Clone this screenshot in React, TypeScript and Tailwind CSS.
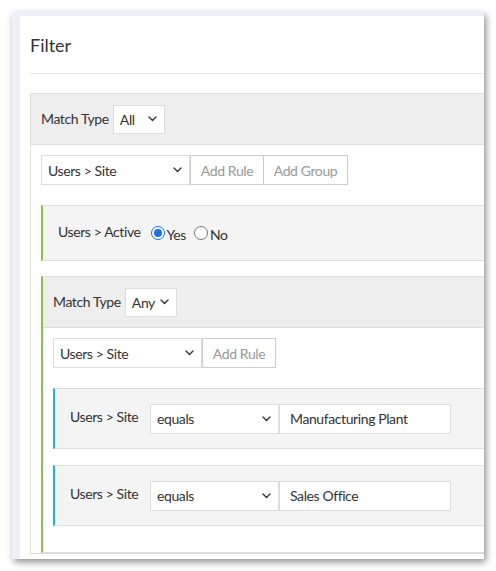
import React from 'react';

const font = { fontFamily: '"Lato", "Liberation Sans", sans-serif' };

const Chevron = () => (
  <svg width="9" height="6" viewBox="0 0 9 6" className="pointer-events-none absolute right-[7px] top-1/2 -translate-y-1/2">
    <path d="M1 1l3.5 3.5L8 1" fill="none" stroke="#333" strokeWidth="1.4" strokeLinecap="round" strokeLinejoin="round" />
  </svg>
);

const FakeSelect = ({ value, width, height = 30 }: { value: string; width: number; height?: number }) => (
  <div
    className="relative flex items-center bg-white border border-[#dddddd] pl-[6px] text-[14px] tracking-[-0.4px] text-[#333]"
    style={{ width, height }}
  >
    {value}
    <Chevron />
  </div>
);

const GroupHeader = ({ value }: { value: string }) => (
  <div className="flex items-center h-[51px] bg-[#eeeeee] border-b border-[#dddddd] pl-[10px] gap-[4px]">
    <span className="text-[14px] tracking-[-0.4px] text-[#333] -mt-[2px]">Match Type</span>
    <FakeSelect value={value} width={52} height={29} />
  </div>
);

const Radio = ({ checked, label }: { checked?: boolean; label: string }) => (
  <label className="flex items-center gap-[2px] text-[14px] tracking-[-0.4px] text-[#333]">
    <span
      className={`w-[14px] h-[14px] rounded-full flex items-center justify-center bg-white border ${checked ? 'border-[#1a73e8]' : 'border-[#767676]'}`}
    >
      {checked && <span className="w-[8px] h-[8px] rounded-full bg-[#1a73e8]" />}
    </span>
    <span className="mt-[2px]">{label}</span>
  </label>
);

const SiteRule = ({ value }: { value: string }) => (
  <div className="flex items-center h-[61px] bg-[#f4f4f4] border-y border-[#dddddd] border-l-2 border-l-[#17bad6] pl-[15px]">
    <span className="text-[14px] tracking-[-0.4px] text-[#333] w-[80px] -mt-[5px]">Users &gt; Site</span>
    <FakeSelect value="equals" width={129} />
    <div className="h-[30px] w-[172px] border border-[#dddddd] bg-white flex items-center pl-[10px] text-[14px] tracking-[-0.4px] text-[#333]">
      {value}
    </div>
  </div>
);

const Btn = ({ label, width, className = '' }: { label: string; width: number; className?: string }) => (
  <div
    className={`h-[30px] border border-[#cccccc] bg-white flex items-center justify-center text-[14px] tracking-[-0.4px] text-[#999] ${className}`}
    style={{ width }}
  >
    {label}
  </div>
);

export default function App() {
  return (
    <div className="p-[12px] bg-white" style={font}>
      <div className="w-[472px] h-[547px] bg-[#edf0f6] pt-[4px] pl-[8px] overflow-hidden shadow-[2px_3px_7px_rgba(0,0,0,0.45)]">
        <div className="bg-white h-full overflow-hidden pl-[10px]">
          <div className="h-[58px] flex items-center pt-[2px] border-b border-[#e5e5e5] text-[18px] text-[#333]">
            Filter
          </div>

          <div className="mt-[19px] w-[600px] border border-[#dddddd]">
            <GroupHeader value="All" />
            <div className="pl-[10px] pt-[10px]">
              <div className="flex">
                <FakeSelect value="Users > Site" width={149} />
                <Btn label="Add Rule" width={74} />
                <Btn label="Add Group" width={85} className="-ml-px" />
              </div>

              <div className="mt-[20px] flex items-center h-[56px] bg-[#f4f4f4] border-y border-[#dddddd] border-l-2 border-l-[#8bc34a] pl-[15px] gap-[10px]">
                <span className="text-[14px] tracking-[-0.4px] text-[#333] -mt-[3px]">Users &gt; Active</span>
                <div className="flex items-center gap-[8px]">
                  <Radio checked label="Yes" />
                  <Radio label="No" />
                </div>
              </div>

              <div className="mt-[15px] border-y border-[#dddddd] border-l-2 border-l-[#8bc34a]">
                <GroupHeader value="Any" />
                <div className="pl-[10px] pt-[10px] pb-[26px]">
                  <div className="flex">
                    <FakeSelect value="Users > Site" width={149} />
                    <Btn label="Add Rule" width={74} />
                  </div>
                  <div className="mt-[20px] flex flex-col gap-[16px]">
                    <SiteRule value="Manufacturing Plant" />
                    <SiteRule value="Sales Office" />
                  </div>
                </div>
              </div>
            </div>
          </div>
        </div>
      </div>
    </div>
  );
}
